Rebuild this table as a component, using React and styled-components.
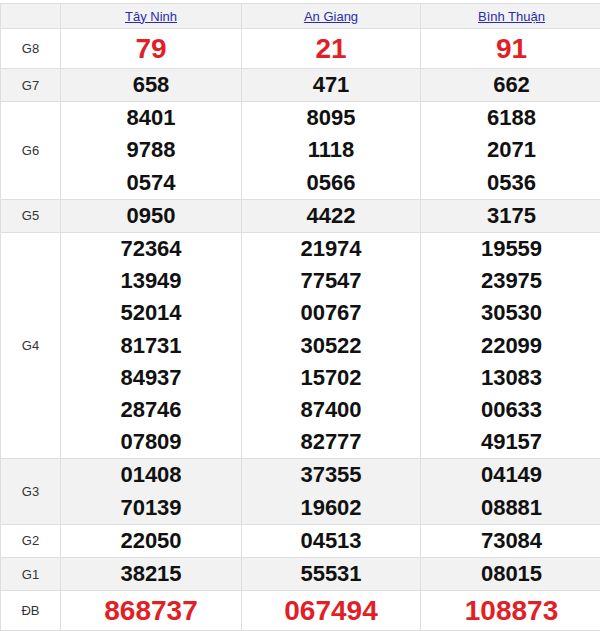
import React from "react";
import styled, { createGlobalStyle } from "styled-components";

const GlobalStyle = createGlobalStyle`
	body {
		margin: 0;
		background: #fff;
		font-family: "Liberation Sans", Arial, sans-serif;
	}
`;

const Wrapper = styled.div`
	padding-top: 3px;
	width: 602px;
`;

const Table = styled.table`
	width: 100%;
	border-collapse: collapse;
	table-layout: fixed;
`;

const HeadCell = styled.th`
	background: #f2f2f2;
	border: 1px solid #dedede;
	height: 24px;
	padding: 0;
	font-weight: normal;
	font-size: 13px;
	text-align: center;
`;

const ProvinceLink = styled.a`
	color: #2b2bb0;
	text-decoration: underline;
`;

const Row = styled.tr`
	background: ${({ $shaded }) => ($shaded ? "#f2f2f2" : "#fff")};
`;

const Label = styled.td`
	border: 1px solid #dedede;
	padding: 0;
	text-align: center;
	font-size: 13px;
	color: #333;
`;

const Cell = styled.td`
	border: 1px solid #dedede;
	padding: ${({ $big }) => ($big ? "3px 0 2px" : "0")};
	text-align: center;
	vertical-align: middle;
`;

const Number = styled.div`
	font-weight: bold;
	font-size: ${({ $big }) => ($big ? "28px" : "22px")};
	line-height: ${({ $big }) => ($big ? "34px" : "32.2px")};
	color: ${({ $big }) => ($big ? "#e21f26" : "#111")};
`;

const provinces = ["Tây Ninh", "An Giang", "Bình Thuận"];

const prizes = [
	{ name: "G8", big: true, values: [["79"], ["21"], ["91"]] },
	{ name: "G7", values: [["658"], ["471"], ["662"]] },
	{ name: "G6", values: [["8401", "9788", "0574"], ["8095", "1118", "0566"], ["6188", "2071", "0536"]] },
	{ name: "G5", values: [["0950"], ["4422"], ["3175"]] },
	{
		name: "G4",
		values: [
			["72364", "13949", "52014", "81731", "84937", "28746", "07809"],
			["21974", "77547", "00767", "30522", "15702", "87400", "82777"],
			["19559", "23975", "30530", "22099", "13083", "00633", "49157"],
		],
	},
	{ name: "G3", values: [["01408", "70139"], ["37355", "19602"], ["04149", "08881"]] },
	{ name: "G2", values: [["22050"], ["04513"], ["73084"]] },
	{ name: "G1", values: [["38215"], ["55531"], ["08015"]] },
	{ name: "ĐB", big: true, values: [["868737"], ["067494"], ["108873"]] },
];

const App = () => {
	return (
		<Wrapper>
			<GlobalStyle />
			<Table>
				<colgroup>
					<col style={{ width: 60 }} />
					<col style={{ width: 181 }} />
					<col style={{ width: 179 }} />
					<col style={{ width: 182 }} />
				</colgroup>
				<thead>
					<tr>
						<HeadCell />
						{provinces.map((p) => (
							<HeadCell key={p}>
								<ProvinceLink href="#">{p}</ProvinceLink>
							</HeadCell>
						))}
					</tr>
				</thead>
				<tbody>
					{prizes.map((prize, i) => (
						<Row key={prize.name} $shaded={i % 2 === 1}>
							<Label>{prize.name}</Label>
							{prize.values.map((col, j) => (
								<Cell key={j} $big={prize.big}>
									{col.map((v, k) => (
										<Number key={k} $big={prize.big}>
											{v}
										</Number>
									))}
								</Cell>
							))}
						</Row>
					))}
				</tbody>
			</Table>
		</Wrapper>
	);
};

export default App;
